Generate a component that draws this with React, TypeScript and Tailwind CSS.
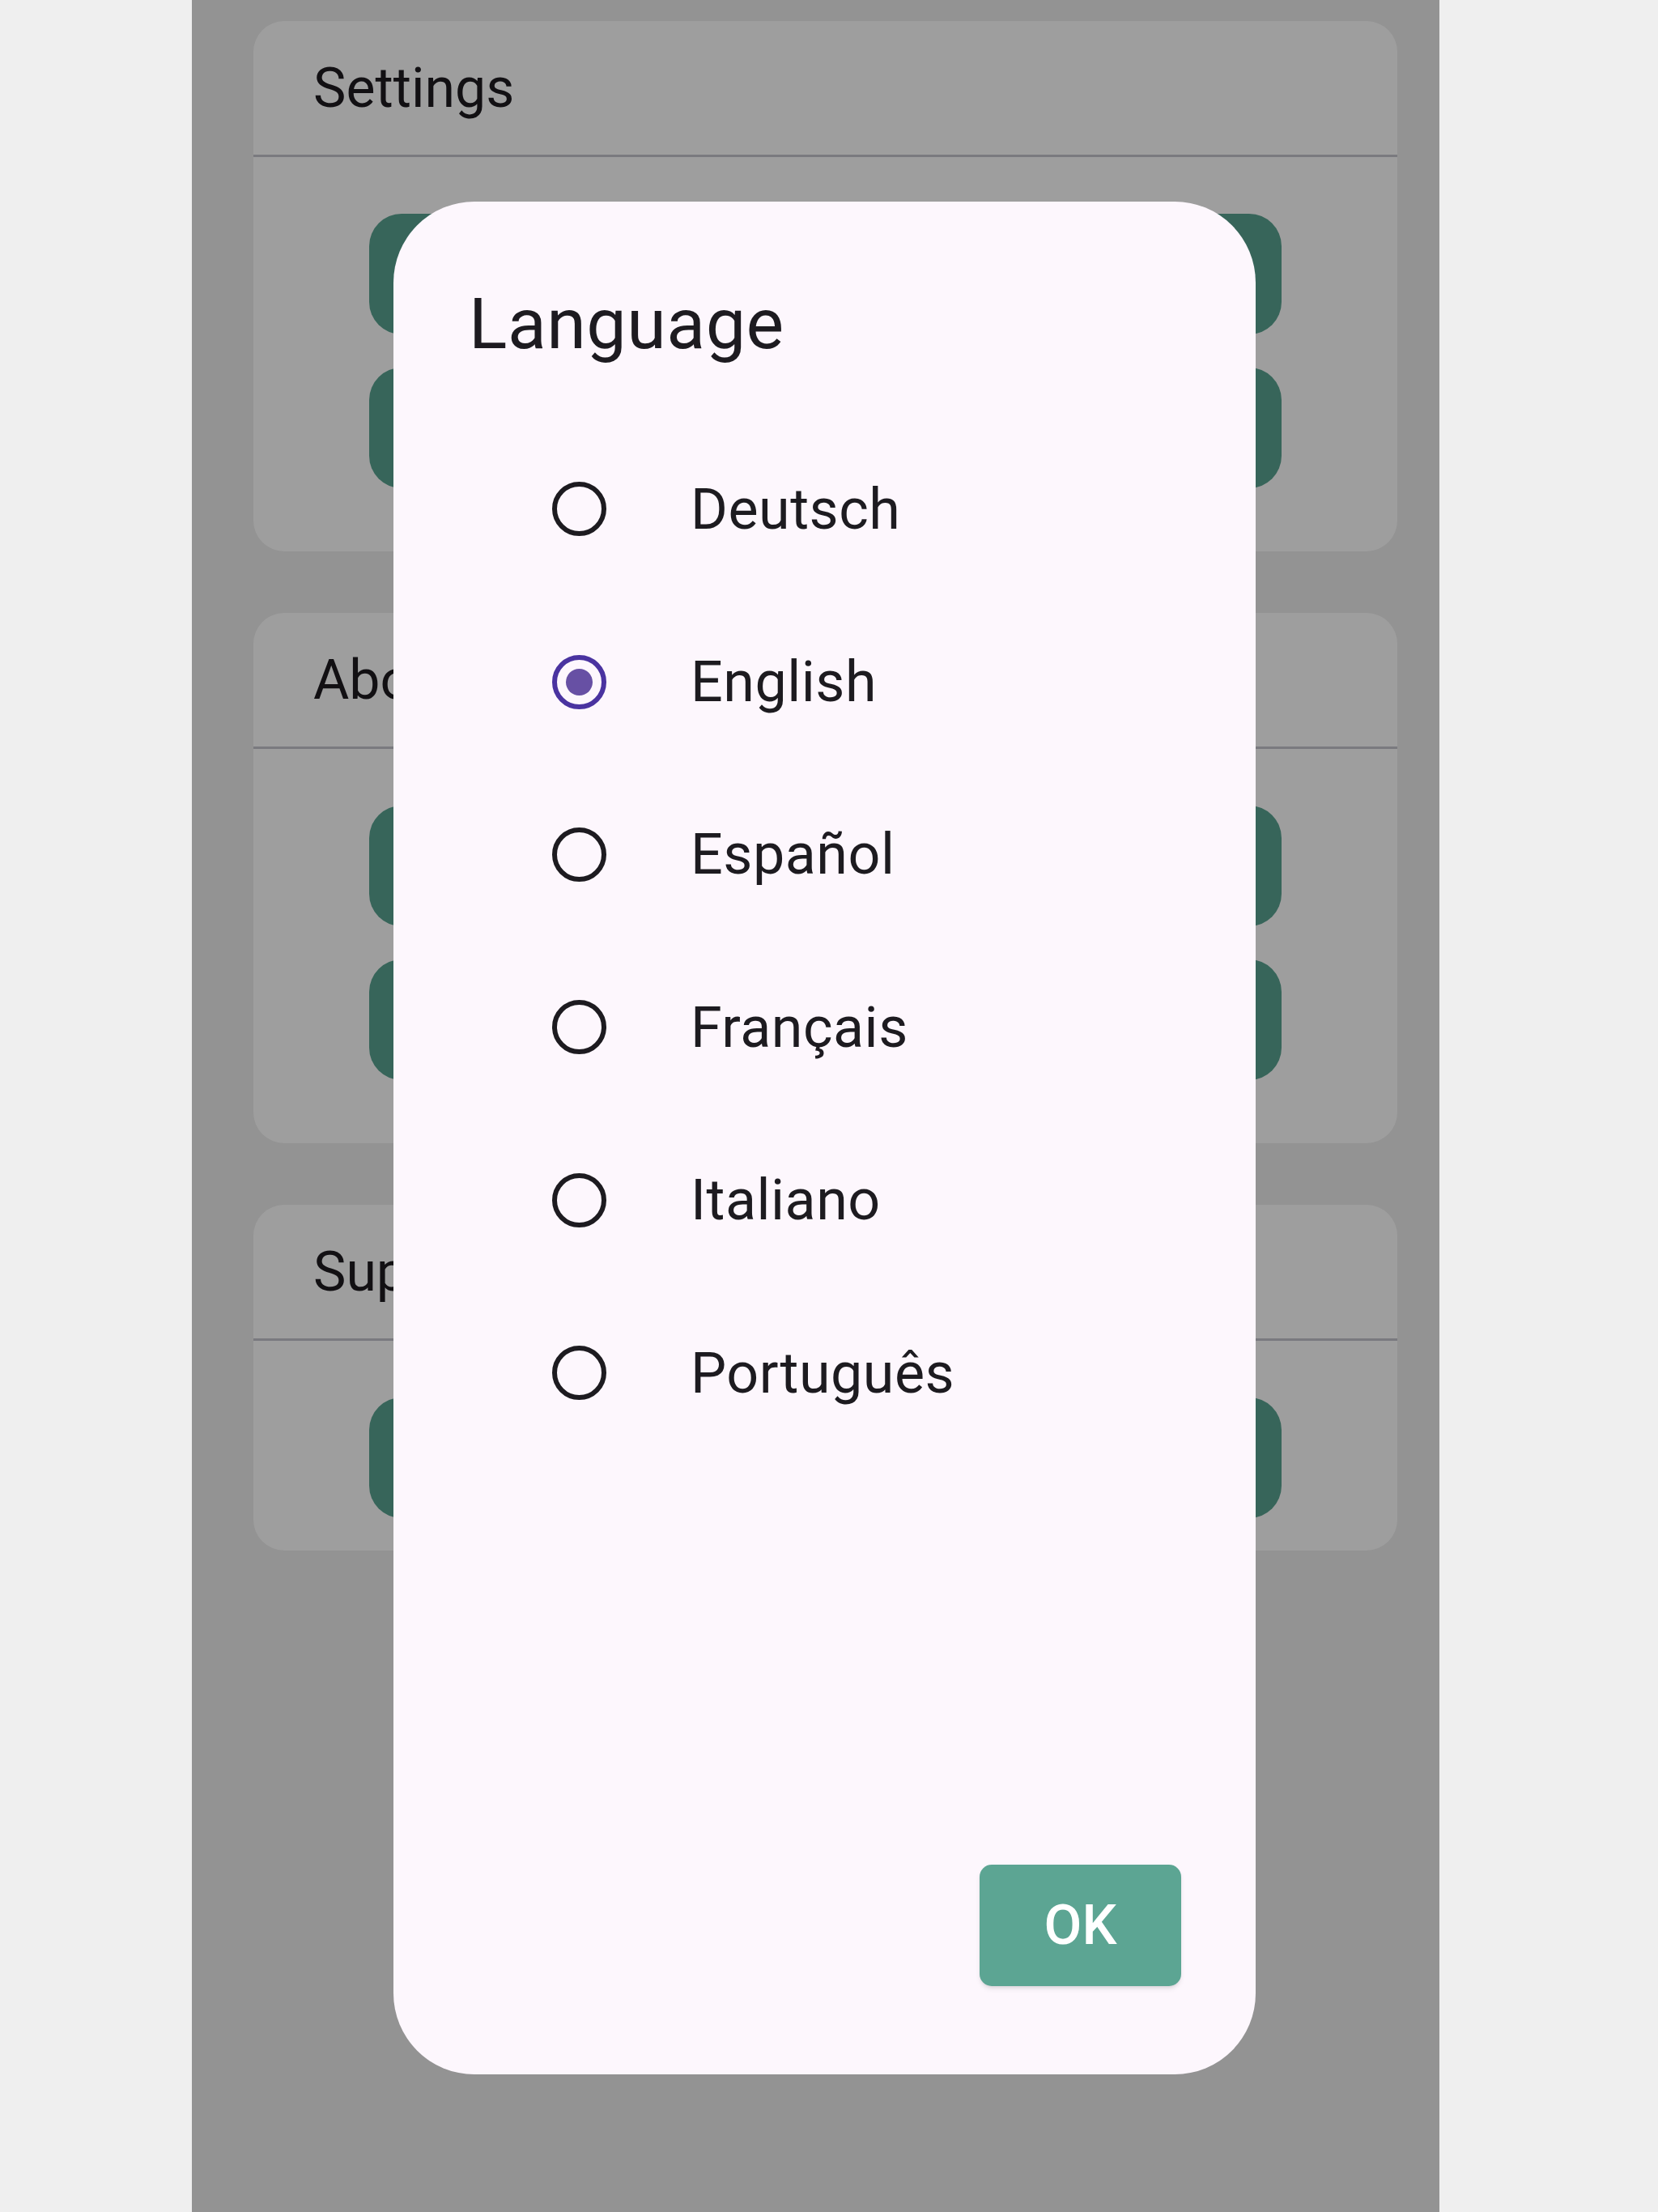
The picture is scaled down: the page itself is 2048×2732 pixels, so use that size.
const sections = [
  { title: "Settings", buttons: 2, bottom: "pb-[78px]" },
  { title: "About", buttons: 2, bottom: "pb-[78px]" },
  { title: "Support", buttons: 1, bottom: "pb-[40px]" },
];

const languages = ["Deutsch", "English", "Español", "Français", "Italiano", "Português"];

function Radio({ checked }: { checked: boolean }) {
  if (checked) {
    return (
      <div className="flex h-[67px] w-[67px] shrink-0 items-center justify-center rounded-full border-[6px] border-[#4a33a0]">
        <div className="h-[33px] w-[33px] rounded-full bg-[#6750a4]" />
      </div>
    );
  }
  return <div className="h-[67px] w-[67px] shrink-0 rounded-full border-[6px] border-[#1d1b20]" />;
}

export default function App() {
  return (
    <div className="min-h-screen bg-[#efefef] pl-[237px] font-['Roboto',sans-serif] text-[#1d1b20]">
      <div className="relative h-[2732px] w-[1541px] overflow-hidden bg-[#ededed]">
        <div className="flex flex-col gap-[76px] pl-[76px] pr-[52px] pt-[26px]">
          {sections.map((s) => (
            <div key={s.title} className={`rounded-[38px] bg-white ${s.bottom}`}>
              <div className="flex h-[165px] items-center pl-[74px] text-[68px] leading-none">
                {s.title}
              </div>
              <div className="h-[3px] bg-[#c6c6ce]" />
              <div className="flex flex-col gap-[41px] px-[143px] pt-[70px]">
                {Array.from({ length: s.buttons }).map((_, i) => (
                  <div key={i} className="h-[149px] rounded-[40px] bg-[#59a391]" />
                ))}
              </div>
            </div>
          ))}
        </div>

        {/* scrim */}
        <div className="absolute inset-0 bg-black/[0.38]" />

        {/* language dialog */}
        <div className="absolute left-[249px] top-[249px] flex h-[2313px] w-[1065px] flex-col rounded-[100px] bg-[#fdf7fd] pb-[109px] pt-[107px]">
          <h2 className="pl-[93px] text-[88px] leading-[88px] font-normal tracking-[0.5px]">Language</h2>
          <div className="mt-[78px] flex flex-col">
            {languages.map((lang) => (
              <div key={lang} className="flex h-[213.4px] items-center pl-[196px]">
                <Radio checked={lang === "English"} />
                <span className="ml-[104px] text-[70px] leading-none tracking-[0.5px]">{lang}</span>
              </div>
            ))}
          </div>
          <button className="mr-[92px] mt-auto flex h-[150px] w-[249px] items-center justify-center self-end rounded-[15px] bg-[#5ca593] text-[68px] font-medium leading-none text-white shadow-md">
            OK
          </button>
        </div>
      </div>
    </div>
  );
}
